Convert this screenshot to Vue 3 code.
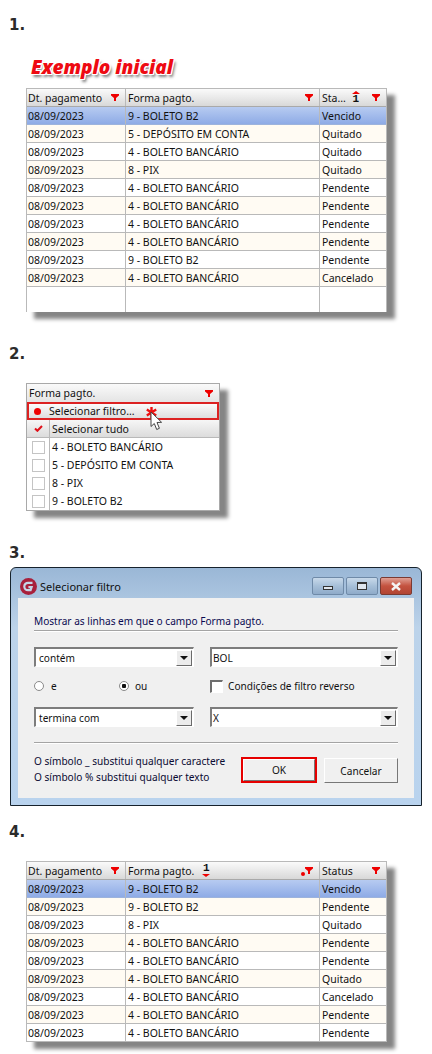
<template>
  <div class="page">
    <h2 class="step step-1">1.</h2>
    <div class="example-title">Exemplo inicial</div>
    <div class="grid-table">
      <div class="row head">
        <div class="cell"><span>Dt. pagamento</span><svg class="funnel" viewBox="0 0 8 7"><path d="M0 0h8v1.5L5 4v3H3V4L0 1.5z" /></svg></div>
        <div class="cell"><span>Forma pagto.</span><svg class="funnel" viewBox="0 0 8 7"><path d="M0 0h8v1.5L5 4v3H3V4L0 1.5z" /></svg></div>
        <div class="cell">
          <span>Sta...</span>
          <span class="sort sort-up"><i class="tri up"></i><b>1</b></span>
          <svg class="funnel" viewBox="0 0 8 7"><path d="M0 0h8v1.5L5 4v3H3V4L0 1.5z" /></svg>
        </div>
      </div>
      <div class="row" v-for="(r, i) in firstRows" :key="i" :class="rowClass(i)">
        <div class="cell">{{ r[0] }}</div>
        <div class="cell">{{ r[1] }}</div>
        <div class="cell">{{ r[2] }}</div>
      </div>
      <div class="row empty">
        <div class="cell"></div>
        <div class="cell"></div>
        <div class="cell"></div>
      </div>
    </div>

    <h2 class="step step-2">2.</h2>
    <div class="popup">
      <div class="popup-head">
        <span>Forma pagto.</span>
        <svg class="funnel" viewBox="0 0 8 7"><path d="M0 0h8v1.5L5 4v3H3V4L0 1.5z" /></svg>
      </div>
      <div class="popup-filter">
        <i class="dot"></i>
        <span>Selecionar filtro...</span>
      </div>
      <div class="popup-all">
        <div class="check-col">
          <svg width="9" height="7" viewBox="0 0 9 7"><path d="M1 3.5L3.4 5.8L8 1" fill="none" stroke="#e0101a" stroke-width="2" /></svg>
        </div>
        <span>Selecionar tudo</span>
      </div>
      <div class="popup-item" v-for="item in options" :key="item">
        <div class="check-col"><i class="box"></i></div>
        <span>{{ item }}</span>
      </div>
      <svg class="star" width="11" height="11" viewBox="0 0 11 11">
        <path d="M5.5 0v11M0.8 2.6l9.4 5.8M10.2 2.6L0.8 8.4" stroke="#ee1111" stroke-width="2.4" fill="none" />
      </svg>
      <svg class="pointer" width="13" height="20" viewBox="0 0 13 20">
        <path d="M1 1v14.5l3.3-3 2.4 6 2.7-1.2-2.4-5.8 4.6-.2z" fill="#fff" stroke="#444" stroke-width="1" />
      </svg>
    </div>

    <h2 class="step step-3">3.</h2>
    <div class="window">
      <div class="titlebar">
        <svg class="logo" width="17" height="17" viewBox="0 0 17 17">
          <circle cx="8.5" cy="8.5" r="8.5" fill="#a8203c" />
          <path d="M12.5 4.8H8a3.7 3.7 0 0 0 0 7.4h2.6l1-3H8.4" fill="none" stroke="#c4d6e8" stroke-width="2.2" />
        </svg>
        <span class="win-title">Selecionar filtro</span>
        <div class="win-buttons">
          <div class="win-btn"><i class="min-mark"></i></div>
          <div class="win-btn"><i class="max-mark"></i></div>
          <div class="win-btn close">
            <svg width="12" height="9" viewBox="0 0 12 9"><path d="M2 1l8 7M10 1L2 8" stroke="#f4f4f4" stroke-width="2.4" fill="none" /></svg>
          </div>
        </div>
      </div>
      <div class="client">
        <div class="intro">Mostrar as linhas em que o campo Forma pagto.</div>
        <div class="rule"></div>
        <div class="combo-row">
          <div class="combo short"><span>contém</span><div class="drop"><i class="tri down-dark"></i></div></div>
          <div class="combo long"><span>BOL</span><div class="drop"><i class="tri down-dark"></i></div></div>
        </div>
        <div class="options">
          <label class="radio-opt first"><i class="radio"></i>e</label>
          <label class="radio-opt second"><i class="radio on"></i>ou</label>
          <label class="check-opt"><i class="box sunken"></i>Condições de filtro reverso</label>
        </div>
        <div class="combo-row">
          <div class="combo short"><span>termina com</span><div class="drop"><i class="tri down-dark"></i></div></div>
          <div class="combo long"><span>X</span><div class="drop"><i class="tri down-dark"></i></div></div>
        </div>
        <div class="rule second-rule"></div>
        <div class="footer">
          <div class="hints">
            <div>O símbolo _ substitui qualquer caractere</div>
            <div>O símbolo % substitui qualquer texto</div>
          </div>
          <div class="ok-wrap"><div class="btn">OK</div></div>
          <div class="btn cancel">Cancelar</div>
        </div>
      </div>
    </div>

    <h2 class="step step-4">4.</h2>
    <div class="grid-table last">
      <div class="row head">
        <div class="cell"><span>Dt. pagamento</span><svg class="funnel" viewBox="0 0 8 7"><path d="M0 0h8v1.5L5 4v3H3V4L0 1.5z" /></svg></div>
        <div class="cell">
          <span>Forma pagto.</span>
          <span class="sort sort-down"><b>1</b><i class="tri down"></i></span>
          <span class="dotted"><i class="dot small"></i><svg class="funnel" viewBox="0 0 8 7"><path d="M0 0h8v1.5L5 4v3H3V4L0 1.5z" /></svg></span>
        </div>
        <div class="cell"><span>Status</span><svg class="funnel" viewBox="0 0 8 7"><path d="M0 0h8v1.5L5 4v3H3V4L0 1.5z" /></svg></div>
      </div>
      <div class="row" v-for="(r, i) in lastRows" :key="i" :class="rowClass(i)">
        <div class="cell">{{ r[0] }}</div>
        <div class="cell">{{ r[1] }}</div>
        <div class="cell">{{ r[2] }}</div>
      </div>
    </div>
  </div>
</template>

<script setup>
const D = '08/09/2023'
const BB = '4 - BOLETO BANCÁRIO'
const B2 = '9 - BOLETO B2'

const firstRows = [
  [D, B2, 'Vencido'],
  [D, '5 - DEPÓSITO EM CONTA', 'Quitado'],
  [D, BB, 'Quitado'],
  [D, '8 - PIX', 'Quitado'],
  [D, BB, 'Pendente'],
  [D, BB, 'Pendente'],
  [D, BB, 'Pendente'],
  [D, BB, 'Pendente'],
  [D, B2, 'Pendente'],
  [D, BB, 'Cancelado'],
]

const lastRows = [
  [D, B2, 'Vencido'],
  [D, B2, 'Pendente'],
  [D, '8 - PIX', 'Quitado'],
  [D, BB, 'Pendente'],
  [D, BB, 'Pendente'],
  [D, BB, 'Quitado'],
  [D, BB, 'Cancelado'],
  [D, BB, 'Pendente'],
  [D, BB, 'Pendente'],
]

const options = ['4 - BOLETO BANCÁRIO', '5 - DEPÓSITO EM CONTA', '8 - PIX', '9 - BOLETO B2']

const rowClass = (i) => (i === 0 ? 'selected' : i % 2 === 1 ? 'cream' : '')
</script>

<style scoped>
.page {
  width: 432px;
  height: 1054px;
  overflow: hidden;
  background: #fff;
  font-family: "Noto Sans", "Open Sans", sans-serif;
  font-size: 10.5px;
  color: #111;
}

.step {
  margin: 0 0 0 9px;
  height: 18px;
  line-height: 18px;
  font-family: "DejaVu Sans", sans-serif;
  font-size: 15px;
  font-weight: 700;
  color: #2b2b2b;
}
.step-1 { padding-top: 16px; }
.step-2 { margin-top: 33px; }
.step-3 { margin-top: 33px; }
.step-4 { margin-top: 17px; }

.example-title {
  margin: 23px 0 0 31px;
  height: 31px;
  line-height: 20px;
  font-family: "Open Sans", sans-serif;
  font-size: 19px;
  font-weight: 800;
  font-style: italic;
  color: #ee0a12;
  text-shadow:
    1px 0 0 #fff, -1px 0 0 #fff, 0 1px 0 #fff, 0 -1px 0 #fff,
    1px 1px 0 #fff, -1px -1px 0 #fff, 1px -1px 0 #fff, -1px 1px 0 #fff,
    2px 3px 3px #777;
}

.grid-table {
  margin-left: 26px;
  width: 361px;
  height: 224px;
  border-left: 1px solid #b9b9b9;
  border-top: 1px solid #b9b9b9;
  border-right: 1px solid #b9b9b9;
  box-sizing: border-box;
  background: #fff;
  box-shadow: 8px 7px 4px #858585;
}
.grid-table.last {
  margin-top: 20px;
  height: 181px;
}

.row {
  display: grid;
  grid-template-columns: 99px 194px 66px;
  height: 18px;
  box-sizing: border-box;
  border-bottom: 1px solid #b9b9b9;
}
.row .cell {
  display: flex;
  align-items: center;
  padding: 0 2px;
  white-space: nowrap;
  border-right: 1px solid #b9b9b9;
  min-width: 0;
}
.row .cell:first-child { padding-left: 1px; }
.row .cell:last-child { border-right: 0; }
.row.head {
  background: linear-gradient(#fafafa, #e6e6e6 60%, #d8d8d8);
  border-bottom: 1px solid #a9a9a9;
}
.row.head .cell { padding-right: 6px; }
.row.head .cell > .funnel,
.row.head .cell > .dotted { margin-left: auto; }
.row.selected {
  background: linear-gradient(#b7cbf1, #8eabe6);
  border-bottom-color: #9db3dc;
}
.row.cream { background: #fffbf3; }
.row.empty {
  height: 25px;
  border-bottom: 0;
}

.funnel {
  width: 8px;
  height: 7px;
  flex: none;
  fill: #ee0000;
}

.sort {
  display: flex;
  flex-direction: column;
  align-items: center;
  font-family: "Liberation Mono", monospace;
  font-size: 11px;
  color: #111;
}
.sort-up { margin-left: 6px; }
.sort-down { margin-left: 8px; }
.sort b { display: block; height: 9px; line-height: 9px; }
.sort-up .tri { margin-bottom: 1px; }
.sort-down .tri { margin-top: 1px; }

.tri {
  display: block;
  width: 0;
  height: 0;
  border-left: 4px solid transparent;
  border-right: 4px solid transparent;
}
.tri.up { border-bottom: 3px solid #ee0000; }
.tri.down { border-top: 3px solid #ee0000; }
.tri.down-dark { border-top: 4px solid #111; }

.dotted {
  display: flex;
  align-items: flex-end;
}
.dot {
  display: block;
  width: 7px;
  height: 7px;
  border-radius: 50%;
  background: #ee0000;
  flex: none;
}
.dot.small {
  width: 4px;
  height: 4px;
  margin-bottom: -2px;
}

.popup {
  position: relative;
  margin: 20px 0 0 26px;
  width: 194px;
  height: 128px;
  box-sizing: border-box;
  border: 1px solid #a9a9a9;
  background: #fff;
  box-shadow: 8px 7px 4px #858585;
}
.popup-head {
  display: flex;
  align-items: center;
  justify-content: space-between;
  height: 18px;
  padding: 0 6px 0 2px;
  background: linear-gradient(#fafafa, #e4e4e4);
  box-sizing: border-box;
}
.popup-filter {
  display: flex;
  align-items: center;
  height: 18px;
  box-sizing: border-box;
  border: 2px solid #dc2222;
  background: linear-gradient(#fbfbfb, #dedede);
  padding-left: 5px;
}
.popup-filter span { margin-left: 8px; }
.popup-all {
  display: flex;
  height: 18px;
  box-sizing: border-box;
  border-bottom: 1px solid #b9b9b9;
  background: linear-gradient(#f6f6f6, #dcdcdc);
}
.popup-item {
  display: flex;
  height: 18px;
}
.check-col {
  display: flex;
  align-items: center;
  justify-content: center;
  width: 22px;
  flex: none;
  border-right: 1px solid #b9b9b9;
  margin-right: 2px;
}
.popup-item span,
.popup-all span { line-height: 19px; }
.box {
  display: block;
  width: 13px;
  height: 13px;
  box-sizing: border-box;
  border: 1px solid #c4c4c4;
  background: #fff;
}
.star {
  position: absolute;
  left: 119px;
  top: 23px;
}
.pointer {
  position: absolute;
  left: 123px;
  top: 27px;
}

.window {
  margin: 5px 0 0 10px;
  width: 412px;
  height: 239px;
  box-sizing: border-box;
  border: 1px solid #16222c;
  border-radius: 6px 6px 0 0;
  padding: 0 7px 7px;
  background: linear-gradient(#9ab7d6 0, #bcd3ea 60px, #b9d3ee 100%);
  display: flex;
  flex-direction: column;
}
.titlebar {
  display: flex;
  align-items: center;
  height: 30px;
  padding-top: 6px;
  box-sizing: border-box;
  flex: none;
}
.logo {
  margin-left: 2px;
  flex: none;
}
.win-title {
  margin-left: 3px;
  font-size: 11px;
  color: #111;
}
.win-buttons {
  display: flex;
  gap: 2px;
  margin-left: auto;
  margin-right: 2px;
}
.win-btn {
  display: flex;
  align-items: center;
  justify-content: center;
  width: 32px;
  height: 18px;
  box-sizing: border-box;
  border: 1px solid #6f8aa8;
  border-radius: 2px;
  background: linear-gradient(#c8d9ea, #a6bfd8 50%, #8fabc9);
}
.win-btn.close {
  border-color: #7a3a32;
  background: linear-gradient(#e0a094, #c4523f 50%, #b14533);
}
.min-mark {
  display: block;
  width: 10px;
  height: 4px;
  margin-top: 4px;
  box-sizing: border-box;
  border: 1px solid #333;
  background: #dfe6ee;
}
.max-mark {
  display: block;
  width: 10px;
  height: 8px;
  box-sizing: border-box;
  border: 1px solid #333;
  border-top-width: 2px;
  background: #dfe6ee;
}
.client {
  flex: 1;
  background: #f0f0f0;
  padding: 0 16px;
  font-size: 10.1px;
  color: #111;
}
.intro {
  padding-top: 16px;
  height: 15px;
  line-height: 15px;
  color: #0a0a50;
}
.rule {
  height: 2px;
  margin-top: 1px;
  background: linear-gradient(#a4a4a4 50%, #fff 50%);
}
.combo-row {
  display: flex;
  gap: 16px;
  margin-top: 15px;
}
.combo {
  display: flex;
  align-items: center;
  justify-content: space-between;
  height: 20px;
  box-sizing: border-box;
  border-style: solid;
  border-color: #7d7d7d #fff #fff #7d7d7d;
  border-width: 2px 1px 1px 2px;
  background: #fff;
  padding-left: 3px;
}
.combo.short { width: 160px; }
.combo.long { width: 188px; padding-left: 1px; }
.drop {
  display: flex;
  align-items: center;
  justify-content: center;
  width: 16px;
  height: 16px;
  box-sizing: border-box;
  border: 1px solid;
  border-color: #fff #6b6b6b #6b6b6b #fff;
  background: #ececec;
  margin-right: 1px;
}
.options {
  display: flex;
  align-items: center;
  height: 20px;
  margin: 9px 0 -4px;
}
.radio-opt,
.check-opt {
  display: flex;
  align-items: center;
}
.radio-opt.first { width: 85px; gap: 7px; }
.radio-opt.second { width: 91px; gap: 6px; }
.check-opt { gap: 5px; }
.radio {
  display: block;
  width: 10px;
  height: 10px;
  box-sizing: border-box;
  border-radius: 50%;
  border: 1px solid #8a8a8a;
  background: #fff;
}
.radio.on {
  background: radial-gradient(circle, #111 0 2px, #fff 2.5px);
}
.box.sunken {
  border-color: #6e6e6e #fff #fff #6e6e6e;
  border-width: 2px 1px 1px 2px;
}
.second-rule { margin-top: 15px; }
.footer {
  display: flex;
  align-items: flex-start;
  margin-top: 13px;
}
.hints {
  width: 207px;
  flex: none;
  margin-top: -4px;
  line-height: 16px;
  white-space: nowrap;
  color: #0a0a32;
}
.ok-wrap {
  border: 2px solid #e60000;
}
.btn {
  display: flex;
  align-items: center;
  justify-content: center;
  width: 72px;
  height: 22px;
  box-sizing: border-box;
  border: 1px solid;
  border-color: #fff #777 #777 #fff;
  background: #f0f0f0;
}
.btn.cancel {
  width: 75px;
  height: 25px;
  margin: 1px 0 0 7px;
}
</style>

<style>
html, body { margin: 0; background: #fff; }
</style>
